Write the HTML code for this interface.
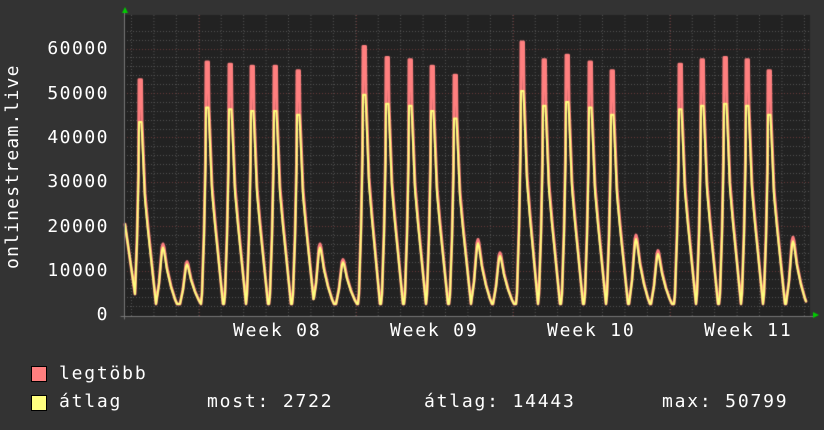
<!DOCTYPE html><html><head><meta charset="utf-8"><style>
body{margin:0;background:#333;width:824px;height:430px;overflow:hidden;position:relative;font-family:"DejaVu Sans Mono","Liberation Mono",monospace;color:#fff}
.t{position:absolute;font-size:18px;white-space:pre;line-height:20px;letter-spacing:1.8px}
.y{position:absolute;font-size:18px;line-height:20px;letter-spacing:1.5px;left:0;width:109px;text-align:right}
.sq{position:absolute;width:14px;height:14px;border:1px solid #000}
</style></head><body>
<canvas id="c" width="824" height="430" style="position:absolute;left:0;top:0"></canvas>
<div class="y" style="top:39px">60000</div>
<div class="y" style="top:84px">50000</div>
<div class="y" style="top:128px">40000</div>
<div class="y" style="top:172px">30000</div>
<div class="y" style="top:217px">20000</div>
<div class="y" style="top:261px">10000</div>
<div class="y" style="top:305px">0</div>
<div class="t" style="left:-77px;top:169px;transform:rotate(-90deg);width:180px;text-align:center;letter-spacing:1.2px">onlinestream.live</div>
<div class="t" style="left:233px;top:321px">Week 08</div>
<div class="t" style="left:390px;top:321px">Week 09</div>
<div class="t" style="left:547px;top:321px">Week 10</div>
<div class="t" style="left:704px;top:321px">Week 11</div>
<div class="sq" style="left:31px;top:366px;background:#ff7f7f"></div>
<div class="sq" style="left:31px;top:395px;background:#ffff7f"></div>
<div class="t" style="left:59px;top:364px">legtöbb</div>
<div class="t" style="left:59px;top:392px">átlag</div>
<div class="t" style="left:207px;top:392px">most: 2722</div>
<div class="t" style="left:424px;top:392px">átlag: 14443</div>
<div class="t" style="left:662px;top:392px">max: 50799</div>
<script>
const c=document.getElementById('c').getContext('2d');
const L=124,R=810,T=15,B=316;
c.fillStyle='#222';c.fillRect(L,T,R-L,B-T);
const Y=v=>B-1-v*44.4/10000;
c.strokeStyle='#555';c.setLineDash([1,2]);c.lineWidth=1;
for(let v=2000;v<=64000;v+=2000){if(v%10000==0)continue;const y=Math.round(Y(v))+.5;c.beginPath();c.moveTo(L,y);c.lineTo(R,y);c.stroke();}
for(let x=131.5;x<R;x+=22.43){c.beginPath();c.moveTo(x,T);c.lineTo(x,B);c.stroke();}
c.strokeStyle='#6a3a3a';
for(let v=10000;v<=60000;v+=10000){const y=Math.round(Y(v))+.5;c.beginPath();c.moveTo(L,y);c.lineTo(R,y);c.stroke();}
for(let x=199.5;x<R;x+=157){c.beginPath();c.moveTo(x,T);c.lineTo(x,B);c.stroke();}
c.setLineDash([]);
const pk=[[140,53000],[163,16000],[187,12000],[207,57000],[230,56500],[252,56000],[275,56000],[298,55000],[320,16000],[343,12500],[364,60500],[387,58000],[410,57500],[432,56000],[455,54000],[478,17000],[500,14000],[522,61500],[544,57500],[567,58500],[590,57000],[612,55000],[636,18000],[658,14500],[680,56500],[702,57500],[725,58000],[747,57500],[769,55000],[793,17500]];
const tb=[[-6,0],[-5,0.05],[-4,0.2],[-3,0.34],[-1.5,0.7],[-1,1],[1.5,1],[2.5,0.88],[5,0.57],[8,0.4],[11,0.25],[14,0.1],[16,0]];
const ts=[[-7,0],[-4,0.35],[-1,0.95],[0,1],[1,0.95],[4,0.6],[8,0.3],[12,0.08],[14,0]];
function interp(t,d){if(d<=t[0][0]||d>=t[t.length-1][0])return 0;for(let j=1;j<t.length;j++){if(d<=t[j][0]){const a=t[j-1],b=t[j];return a[1]+(b[1]-a[1])*(d-a[0])/(b[0]-a[0]);}}return 0;}
function val(x,red){
 const mn=2500;let v=mn;
 for(const p of pk){const d=x-p[0];if(d<-8||d>17)continue;const big=p[1]>30000;
  if(big){const Py=p[1]*0.82;let f=interp(tb,d);let w=mn+(Py-mn)*f;
    if(red){w=mn+(Py*1.06-mn)*f;if(d>=-1&&d<=1.5)w=p[1];}
    v=Math.max(v,w);}
  else{const Pv=red?p[1]:p[1]*0.95;v=Math.max(v,mn+(Pv-mn)*interp(ts,d));}
 }
 const d=x-L;v=Math.max(v,22000*Math.max(0,1-d/14));
 return v;
}
function draw(col,red,w){c.strokeStyle=col;c.lineWidth=w;c.lineJoin='round';c.lineCap='round';c.beginPath();for(let x=L+1;x<=R-4;x+=0.5){const y=Y(val(x,red));x==L+1?c.moveTo(x,y):c.lineTo(x,y);}c.stroke();}
draw('#ff7f7f',true,3);draw('#ffff7f',false,2);
c.strokeStyle='#777';c.lineWidth=1;c.beginPath();c.moveTo(L+.5,T-5);c.lineTo(L+.5,B+3);c.moveTo(L-3,B+.5);c.lineTo(R+4,B+.5);c.stroke();
c.fillStyle='#0c0';c.beginPath();c.moveTo(122,13);c.lineTo(128,13);c.lineTo(125,7);c.fill();
c.beginPath();c.moveTo(813,312);c.lineTo(813,318);c.lineTo(819,315);c.fill();
</script></body></html>
